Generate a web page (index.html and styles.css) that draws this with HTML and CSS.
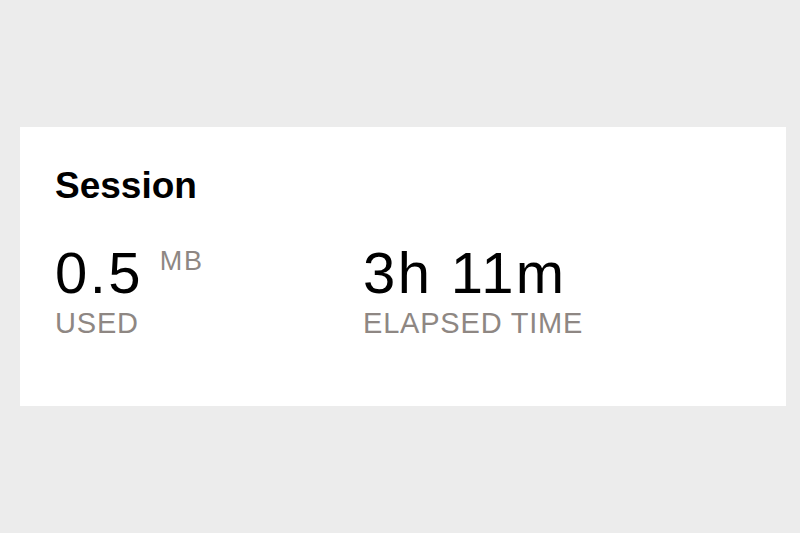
FILE: index.html
```html
<!DOCTYPE html>
<html>
<head>
<meta charset="utf-8">
<link rel="stylesheet" href="styles.css">
</head>
<body>
<div class="card">
  <h2 class="title">Session</h2>
  <div class="stats">
    <div class="stat stat-used">
      <div class="value">0.5<span class="unit">MB</span></div>
      <div class="label">USED</div>
    </div>
    <div class="stat">
      <div class="value">3h 11m</div>
      <div class="label">ELAPSED TIME</div>
    </div>
  </div>
</div>
</body>
</html>
```
FILE: styles.css
```css
html, body {
  margin: 0;
  padding: 0;
  background: #ececec;
}
body {
  padding: 127px 14px 0 20px;
  font-family: "Liberation Sans", Arial, sans-serif;
}
.card {
  background: #ffffff;
  width: 766px;
  box-sizing: border-box;
  padding: 40px 35px 68px 35px;
}
.title {
  margin: 0;
  font-size: 37px;
  line-height: 37px;
  font-weight: 700;
  color: #000;
}
.stats {
  display: flex;
  margin-top: 40px;
}
.stat-used {
  width: 308px;
}
.value {
  font-size: 58px;
  line-height: 58px;
  letter-spacing: 2.4px;
  color: #000;
}
.unit {
  display: inline-block;
  vertical-align: top;
  font-size: 27px;
  line-height: 27px;
  letter-spacing: 1.8px;
  padding-top: 4px;
  margin-left: 17px;
  color: #8e8783;
}
.label {
  margin-top: 7px;
  font-size: 29px;
  line-height: 29px;
  letter-spacing: 0.8px;
  color: #8e8783;
}
```
